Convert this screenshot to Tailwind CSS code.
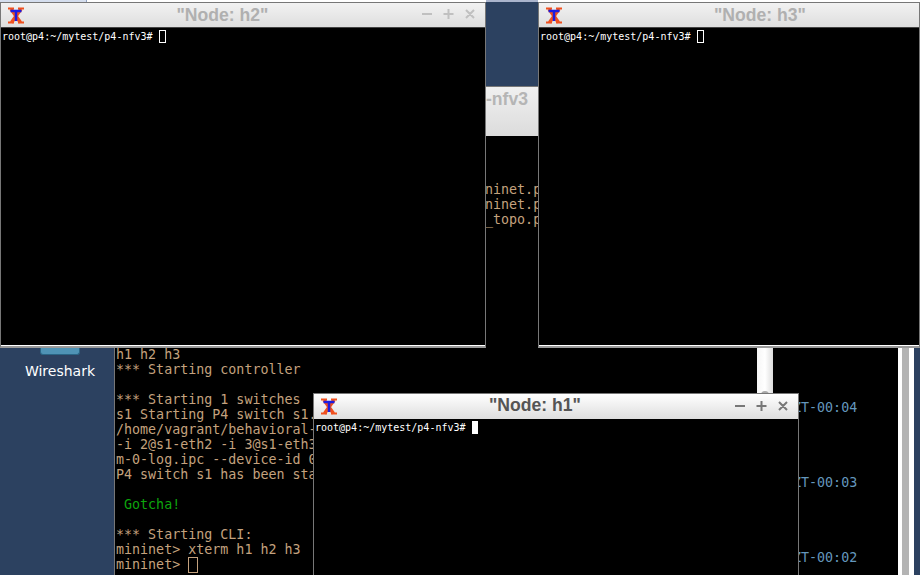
<!DOCTYPE html>
<html>
  <head>
    <meta charset="UTF-8" />
    <script src="https://cdn.jsdelivr.net/npm/@tailwindcss/browser@4"></script>
  </head>
  <body class="bg-[#2c4160]">
    <div id="desktop" class="relative w-[920px] h-[575px] overflow-hidden bg-[#2c4160]">
      <!-- top edge of a window behind everything -->
      <div class="absolute left-0 top-0 w-[920px] h-[2px] flex">
        <div class="w-[87px] bg-[#d5deee] border-r border-[#8fa0c0]"></div>
        <div class="flex-1 bg-white"></div>
      </div>
      <div class="absolute left-[486px] top-0 w-[52px] h-[2px] bg-[#aab4cc]"></div>

      <!-- wireshark launcher -->
      <div class="absolute left-0 top-[348px] w-[120px] flex flex-col items-center">
        <div class="w-[40px] h-[7px] bg-[#4f93b5] rounded-b-[3px] border-b border-x border-[#2a6585]"></div>
        <div class="mt-[8px] text-white text-[14px] leading-[16px] font-['DejaVu_Sans',sans-serif]">Wireshark</div>
      </div>

      <!-- editor window behind h2/h3 -->
      <div class="absolute left-[486px] top-[86px] w-[60px] h-[262px] bg-black border-t border-[#777]">
        <div class="h-[49px] bg-gradient-to-b from-[#f0f0f0] to-[#dcdcdc] text-[#b5b5b5] font-bold text-[17.6px] leading-[24px] font-['Liberation_Sans',sans-serif]">-nfv3</div>
        <div class="mt-[46px] -ml-[1px] text-[#c4a27e] text-[13.33px] leading-[15px] font-['DejaVu_Sans_Mono',monospace] whitespace-pre">ninet.p
ninet.p
_topo.p</div>
      </div>

      <!-- mininet terminal -->
      <div class="absolute left-[114px] top-[348px] w-[806px] h-[227px] bg-black border-l border-[#777] flex">
        <div class="w-[642px] pl-[1px] -mt-[1px] text-[#c4a27e] text-[13.33px] leading-[15px] font-['DejaVu_Sans_Mono',monospace] whitespace-pre overflow-hidden">h1 h2 h3
*** Starting controller

*** Starting 1 switches
s1 Starting P4 switch s1.
/home/vagrant/behavioral-
-i 2@s1-eth2 -i 3@s1-eth3
m-0-log.ipc --device-id 0
P4 switch s1 has been sta

<span class="text-[#0da50d]"> Gotcha!</span>

*** Starting CLI:
mininet&gt; xterm h1 h2 h3
mininet&gt; <span class="inline-block w-[10px] h-[16px] border border-[#c4a27e] align-[-4px]"></span></div>
        <div class="relative w-[16px] h-[47px] bg-gradient-to-r from-[#f5f5f5] via-white to-[#dddddd]">
          <div class="absolute left-[4px] bottom-0 w-[8px] h-[4px] rounded-t-full bg-[#aaaaaa]"></div>
        </div>
        <div class="w-[125px] flex flex-col gap-[60px] pt-[52px] pl-[20px] text-[#6497bd] text-[13.33px] leading-[15px] font-['DejaVu_Sans_Mono',monospace]">
          <div>ZT-00:04</div>
          <div>ZT-00:03</div>
          <div>ZT-00:02</div>
        </div>
        <div class="w-[4px] bg-white"></div>
        <div class="w-[7px] bg-[#b4b4b4]"></div>
        <div class="w-[5px] bg-white"></div>
        <div class="w-[6px] bg-[#2c4160]"></div>
      </div>

      <!-- Node: h2 -->
      <div class="absolute left-0 top-[2px] w-[486px] h-[346px] flex flex-col bg-black border border-[#777] border-b-[2px] border-b-[#999]">
        <div class="h-[24px] shrink-0 flex items-center bg-gradient-to-b from-[#f2f2f2] to-[#dedede]">
          <svg class="ml-[6px] w-[18px] h-[17px]" viewBox="0 0 18 17" fill="none"><path d="M4 2l9.500 13.500M14 2L4.500 15.500" stroke="#f0501e" stroke-width="3.500"/><path d="M1 1.500h6M11 1.500h6M1 15.500h6M11 15.500h6" stroke="#f0501e" stroke-width="2"/><path d="M3.500 4h11M9 4v10" stroke="#1c1ce0" stroke-width="2.500"/></svg>
          <div class="flex-1 text-center text-[#b0b0b0] font-bold text-[17.6px] font-['Liberation_Sans',sans-serif] pr-[2px]">"Node: h2"</div>
          <svg class="w-[60px] h-[14px] mr-[3px] mb-[2px]" viewBox="0 0 60 14" stroke="#c0c0c0" stroke-width="2" fill="none"><path d="M0 7h10M26.500 2v10M21.500 7h10M44 3l8 8M52 3l-8 8"/></svg>
        </div>
        <div class="border-t border-[#444] border-b border-b-white flex-1 pl-[1px] pt-[2px] text-white text-[10px] leading-[14px] font-['DejaVu_Sans_Mono',monospace]">root@p4:~/mytest/p4-nfv3# <span class="inline-block w-[7px] h-[13px] border border-white align-[-3px]"></span></div>
      </div>

      <!-- Node: h3 -->
      <div class="absolute left-[538px] top-[2px] w-[382px] h-[346px] flex flex-col bg-black border border-[#777] border-b-[2px] border-b-[#999]">
        <div class="h-[24px] shrink-0 flex items-center bg-gradient-to-b from-[#f2f2f2] to-[#dedede]">
          <svg class="ml-[6px] w-[18px] h-[17px]" viewBox="0 0 18 17" fill="none"><path d="M4 2l9.500 13.500M14 2L4.500 15.500" stroke="#f0501e" stroke-width="3.500"/><path d="M1 1.500h6M11 1.500h6M1 15.500h6M11 15.500h6" stroke="#f0501e" stroke-width="2"/><path d="M3.500 4h11M9 4v10" stroke="#1c1ce0" stroke-width="2.500"/></svg>
          <div class="ml-[151px] text-[#b0b0b0] font-bold text-[17.6px] font-['Liberation_Sans',sans-serif]">"Node: h3"</div>
        </div>
        <div class="border-t border-[#444] border-b border-b-white flex-1 pl-[1px] pt-[2px] text-white text-[10px] leading-[14px] font-['DejaVu_Sans_Mono',monospace]">root@p4:~/mytest/p4-nfv3# <span class="inline-block w-[7px] h-[13px] border border-white align-[-3px]"></span></div>
      </div>

      <!-- Node: h1 -->
      <div class="absolute left-[313px] top-[393px] w-[486px] h-[182px] flex flex-col bg-black border border-[#777] border-b-0">
        <div class="h-[25px] shrink-0 flex items-center bg-gradient-to-b from-white to-[#dedede]">
          <svg class="ml-[6px] w-[18px] h-[17px]" viewBox="0 0 18 17" fill="none"><path d="M4 2l9.500 13.500M14 2L4.500 15.500" stroke="#f0501e" stroke-width="3.500"/><path d="M1 1.500h6M11 1.500h6M1 15.500h6M11 15.500h6" stroke="#f0501e" stroke-width="2"/><path d="M3.500 4h11M9 4v10" stroke="#1c1ce0" stroke-width="2.500"/></svg>
          <div class="flex-1 text-center text-[#555] font-bold text-[17.6px] font-['Liberation_Sans',sans-serif] pr-[3px] pb-[2px]">"Node: h1"</div>
          <svg class="w-[60px] h-[14px] mr-[3px] mb-[2px]" viewBox="0 0 60 14" stroke="#777" stroke-width="2" fill="none"><path d="M0 7h10M26.500 2v10M21.500 7h10M44 3l8 8M52 3l-8 8"/></svg>
        </div>
        <div class="flex-1 pl-[1px] pt-[2px] text-white text-[10px] leading-[14px] font-['DejaVu_Sans_Mono',monospace]">root@p4:~/mytest/p4-nfv3# <span class="inline-block w-[6px] h-[13px] bg-white align-[-3px]"></span></div>
      </div>
    </div>
  </body>
</html>
